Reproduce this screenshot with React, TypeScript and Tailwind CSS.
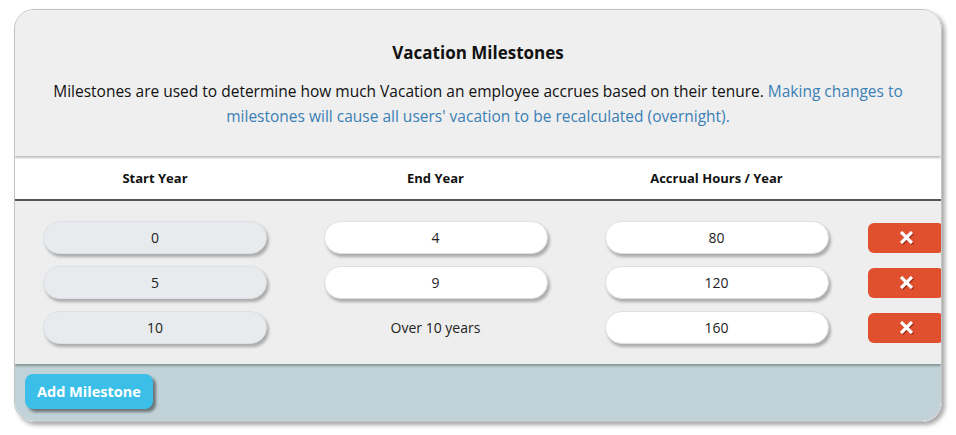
const rows = [
  { start: '0', end: '4', hours: '80' },
  { start: '5', end: '9', hours: '120' },
  { start: '10', end: null, hours: '160' },
]

function Field({ value, muted }: { value: string; muted?: boolean }) {
  return (
    <div
      className={`w-[224px] h-[33px] rounded-full border border-[#dcdfe3] flex items-center justify-center text-[14px] text-[#222] shadow-[2px_3px_3px_rgba(0,0,0,0.28)] ${
        muted ? 'bg-[#e8ebee]' : 'bg-white'
      }`}
    >
      {value}
    </div>
  )
}

function XIcon() {
  return (
    <svg width="13" height="13" viewBox="0 0 12 12" className="drop-shadow-[1px_1px_0_rgba(120,30,10,0.7)]">
      <path d="M2 2 L10 10 M10 2 L2 10" stroke="white" strokeWidth="3" strokeLinecap="square" />
    </svg>
  )
}

export default function App() {
  return (
    <div className="w-[956px] h-[435px] bg-white pt-[9px] pl-[14px]" style={{ fontFamily: '"Open Sans", "Noto Sans", sans-serif' }}>
      <div className="w-[928px] h-[413px] rounded-[20px] overflow-hidden border border-[#c4c4c4] shadow-[3px_3px_4px_rgba(0,0,0,0.35)] flex flex-col">

        {/* Header */}
        <div className="h-[146px] bg-[#efefef] flex flex-col items-center pt-[31px] shadow-[0_2px_2px_rgba(0,0,0,0.25)] z-10">
          <h1 className="text-[17px] font-bold text-[#111] leading-[24px]">Vacation Milestones</h1>
          <p className="mt-[14px] text-[15.5px] leading-[25px] text-center text-[#111] px-[20px]">
            Milestones are used to determine how much Vacation an employee accrues based on their tenure.{' '}
            <span className="text-[#3a7fb5]">
              Making changes to milestones will cause all users' vacation to be recalculated (overnight).
            </span>
          </p>
        </div>

        {/* Column labels */}
        <div className="h-[43px] mt-[2px] bg-white border-b-2 border-[#555] grid grid-cols-[280px_281px_281px_1fr] items-center text-[13px] font-bold text-[#111]">
          <div className="text-center">Start Year</div>
          <div className="text-center">End Year</div>
          <div className="text-center">Accrual Hours / Year</div>
          <div />
        </div>

        {/* Rows */}
        <div className="bg-[#eeeeee] pt-[20px] pb-[20px] flex flex-col gap-[12px] shadow-[0_2px_2px_rgba(0,0,0,0.3)] z-10">
          {rows.map(r => (
            <div key={r.start} className="grid grid-cols-[280px_281px_281px_1fr] items-center h-[33px]">
              <div className="flex justify-center">
                <Field value={r.start} muted />
              </div>
              <div className="flex justify-center">
                {r.end ? <Field value={r.end} /> : <span className="text-[14px] text-[#222]">Over 10 years</span>}
              </div>
              <div className="flex justify-center">
                <Field value={r.hours} />
              </div>
              <div className="pl-[11px]">
                <button className="w-[76px] h-[30px] rounded-[6px] bg-[#e0502f] flex items-center justify-center">
                  <XIcon />
                </button>
              </div>
            </div>
          ))}
        </div>

        {/* Footer */}
        <div className="flex-1 bg-[#c1d3d8] pt-[10px] pl-[10px]">
          <button className="h-[35px] px-[12px] rounded-[8px] bg-[#3bbfe8] text-white text-[14.5px] font-bold shadow-[3px_3px_3px_rgba(0,0,0,0.45)]">
            Add Milestone
          </button>
        </div>
      </div>
    </div>
  )
}
